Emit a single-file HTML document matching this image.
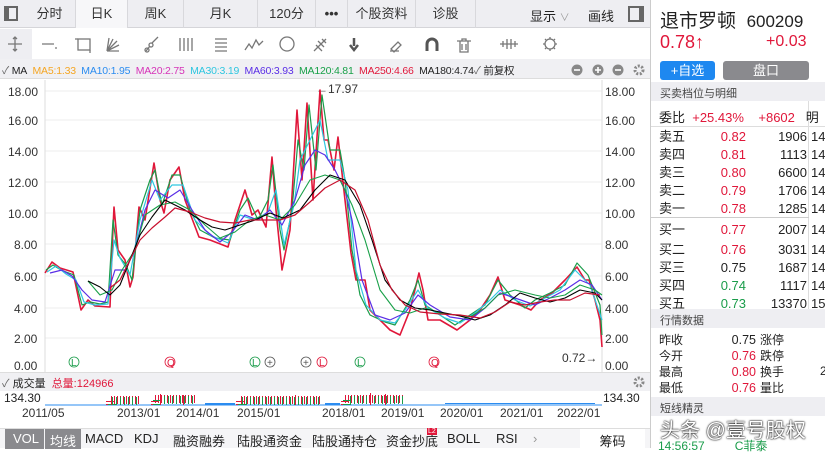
<!DOCTYPE html>
<html><head><meta charset="utf-8"><style>
*{margin:0;padding:0;box-sizing:border-box}
body{width:825px;height:448px;overflow:hidden;background:#fff;font-family:"Liberation Sans","Noto Sans CJK SC",sans-serif;position:relative;color:#222}
.a{position:absolute;white-space:nowrap}
.tab{position:absolute;top:0;height:28px;line-height:28px;font-size:13px;text-align:center;color:#333;border-right:1px solid #d8d8dc}
.r{color:#e0173a}.g{color:#1a9c4a}
</style></head><body>
<div class="a" style="left:0;top:0;width:650px;height:28px;background:#eeeef2;border-bottom:1px solid #d5d5d9"></div>
<div class="a" style="left:4px;top:6px;width:14px;height:15px;border:2px solid #666;border-left-width:5px"></div>
<div class="tab" style="left:24px;width:52px">分时</div>
<div class="tab" style="left:76px;width:52px;background:#f7f7f9">日K</div>
<div class="tab" style="left:128px;width:56px">周K</div>
<div class="tab" style="left:184px;width:74px">月K</div>
<div class="tab" style="left:258px;width:58px">120分</div>
<div class="tab" style="left:316px;width:32px;font-weight:bold">•••</div>
<div class="tab" style="left:348px;width:68px">个股资料</div>
<div class="tab" style="left:416px;width:60px">诊股</div>
<div class="a" style="left:530px;top:6px;font-size:13px">显示 <span style="color:#999;font-size:10px">∨</span></div>
<div class="a" style="left:588px;top:6px;font-size:13px">画线</div>
<div class="a" style="left:628px;top:6px;width:16px;height:16px;border:2px solid #666;border-right-width:5px"></div>
<div class="a" style="left:0;top:29px;width:650px;height:30px;background:#fff"></div>
<div class="a" style="left:0;top:29px;width:32px;height:30px;background:#eeeef2"></div>
<svg class="a" style="left:0;top:29px" width="650" height="30" stroke="#777" fill="none" stroke-width="1.3">
<path d="M15 8v14M8 15h14M13 10l2-2 2 2M13 20l2 2 2-2"/>
<path d="M42 15h12M55 19l2 0"/>
<rect x="78" y="10" width="12" height="11"/><path d="M75 10h3M90 21v3"/>
<path d="M107 22l10-10M107 22l12-6M107 22h12M107 22l6-12M107 22l2-13"/>
<path d="M146 22l4-5M152 14l6-6"/><circle cx="151" cy="16" r="2"/><circle cx="147" cy="21" r="2"/>
<path d="M180 9v13M184 9v13M188 9v13M192 9v13"/>
<path d="M215 10h12M215 14h12M215 18h12M215 22h12"/>
<path d="M245 21l4-6 3 4 4-8 3 5 4-4"/>
<circle cx="287" cy="15" r="7"/>
<path d="M314 22l12-12M318 12l6 6M316 16l6 6M322 10l4 4"/>
<path d="M354 9v8M350 16l4 5 4-5" stroke-width="2.5" stroke="#555"/>
<path d="M390 22h9M391 20l7-7 3 3-7 7z"/>
<path d="M427 22v-7a5 5 0 0 1 10 0v7" stroke-width="3" stroke="#555"/>
<path d="M457 12h14M460 12v11h8V12M462 15v6M466 15v6M462 12v-2h4v2"/>
<path d="M500 15h18M503 12v6M507 10v10M511 10v10M515 12v6"/>
<circle cx="550" cy="15" r="5"/><path d="M550 8v2M550 20v2M543 15h2M555 15h2M545 10l1 1M554 19l1 1M555 10l-1 1M545 20l1-1"/>
</svg>
<div class="a" style="left:0;top:59px;width:650px;height:20px;background:#f0f0f3;border-bottom:1px solid #ddd"></div>
<div class="a" style="left:2px;top:63px;font-size:10.5px;letter-spacing:-0.2px"><span style="color:#666">✓</span> MA&nbsp; <span style="color:#f5a623">MA5:1.33</span>&nbsp; <span style="color:#2b8cf0">MA10:1.95</span>&nbsp; <span style="color:#d633b8">MA20:2.75</span>&nbsp; <span style="color:#2ec6e0">MA30:3.19</span>&nbsp; <span style="color:#5a2ee6">MA60:3.93</span>&nbsp; <span style="color:#18a048">MA120:4.81</span>&nbsp; <span style="color:#e0173a">MA250:4.66</span>&nbsp; <span>MA180:4.74</span><span style="color:#666">✓</span> 前复权</div>
<svg class="a" style="left:568px;top:62px" width="80" height="16"><circle cx="9" cy="8" r="5.5" fill="#888"/><path d="M6 8h6" stroke="#fff" stroke-width="1.6"/><circle cx="30" cy="8" r="5.5" fill="#888"/><path d="M27 8h6M30 5v6" stroke="#fff" stroke-width="1.6"/><circle cx="50" cy="8" r="5.5" fill="#888"/><path d="M47 8h6" stroke="#fff" stroke-width="1.6"/><circle cx="71" cy="8" r="4" fill="none" stroke="#888" stroke-width="3" stroke-dasharray="2 1.5"/></svg>
<svg class="a" style="left:0;top:80px" width="650" height="292" font-size="12" font-family="Liberation Sans">
<g stroke="#eee"><path d="M45 11h557M45 40h557M45 71h557M45 102h557M45 133h557M45 164h557M45 196h557M45 228h557M45 258h557"/></g>
<path d="M45 0v292M602 0v292" stroke="#ddd"/>
<g fill="#333"><text x="8" y="16">18.00</text><text x="8" y="45">16.00</text><text x="8" y="76">14.00</text><text x="8" y="107">12.00</text><text x="8" y="138">10.00</text><text x="14" y="169">8.00</text><text x="14" y="201">6.00</text><text x="14" y="233">4.00</text><text x="14" y="263">2.00</text><text x="14" y="290">0.00</text>
<text x="605" y="16">18.00</text><text x="605" y="45">16.00</text><text x="605" y="76">14.00</text><text x="605" y="107">12.00</text><text x="605" y="138">10.00</text><text x="605" y="169">8.00</text><text x="605" y="201">6.00</text><text x="605" y="233">4.00</text><text x="605" y="263">2.00</text><text x="605" y="290">0.00</text>
<text x="316" y="13">←17.97</text><text x="562" y="282">0.72→</text></g>
<g fill="none" stroke-width="1.6" stroke-linejoin="round">
<polyline stroke="#e0173a" points="45,193 52,182 60,188 73,192 81,230 88,220 95,226 110,227 112,170 114,127 118,170 125,180 130,207 133,197 139,127 145,140 154,83 160,120 164,133 170,100 179,87 185,120 199,157 210,160 228,167 235,140 245,110 252,135 258,130 266,147 270,100 272,77 276,130 282,190 290,150 297,30 302,100 307,23 313,120 320,10 324,60 328,60 334,90 338,57 345,120 351,173 356,200 365,200 370,230 380,240 390,250 400,255 410,230 419,193 423,210 428,240 440,240 457,250 470,240 480,230 490,215 498,197 505,220 520,225 531,230 540,220 552,213 565,200 577,187 585,200 589,200 595,220 600,240 602,267"/>
<polyline stroke="#1a9c4a" stroke-width="1.2" points="46,190 53,185 61,190 74,195 82,225 90,222 100,224 108,222 113,140 118,175 126,185 132,200 140,130 150,100 155,90 162,125 172,95 180,95 190,130 200,150 215,158 230,160 240,130 248,118 258,140 268,120 273,85 280,150 284,170 292,130 298,60 304,90 309,25 316,90 322,15 330,70 340,70 345,100 352,170 360,215 370,235 385,242 395,245 410,220 418,200 425,225 440,235 455,245 470,235 485,225 498,200 510,215 525,228 535,220 550,213 565,205 577,183 588,195 600,225 602,255"/>
<polyline stroke="#2ec6e0" stroke-width="1.2" points="47,192 56,186 66,194 76,200 84,222 95,225 108,224 114,160 120,178 130,195 140,140 152,100 160,120 172,105 183,105 195,140 210,155 228,163 240,135 255,140 268,132 276,110 284,165 294,125 300,80 310,60 320,40 328,80 340,80 348,110 356,190 366,225 380,240 395,243 405,230 418,210 428,228 445,238 460,243 475,233 490,220 500,210 515,220 530,226 545,218 560,210 575,190 590,205 602,240"/>
<polyline stroke="#5a2ee6" stroke-width="1.2" points="50,193 62,190 72,196 82,210 92,220 105,222 115,190 125,190 135,170 145,130 155,110 168,118 180,110 192,130 205,150 220,162 232,152 245,135 258,140 270,130 282,145 295,120 305,85 315,70 325,75 335,90 345,110 352,140 362,200 375,235 390,240 405,233 418,215 430,225 450,237 470,240 485,228 500,213 515,218 535,225 550,218 565,210 580,200 592,205 602,220"/>
<polyline stroke="#18a048" stroke-width="1.1" points="88,201 100,215 112,210 122,190 135,170 145,135 160,125 175,122 190,130 205,145 220,158 235,152 250,140 265,135 280,140 295,125 310,100 325,95 340,100 352,125 365,160 380,210 395,230 410,233 425,228 440,233 455,235 470,237 485,228 498,215 515,210 535,215 550,218 565,215 580,205 595,210 602,215"/>
<polyline stroke="#000" stroke-width="1.1" points="88,201 100,207 110,215 120,205 130,180 140,155 152,137 165,120 175,125 185,130 200,140 212,147 225,150 240,145 255,140 270,133 283,138 300,130 315,110 330,95 345,100 360,125 372,160 385,200 400,220 415,228 430,230 445,233 460,236 475,240 490,235 505,225 520,213 535,218 550,222 565,218 580,210 595,213 602,220"/>
<polyline stroke="#c8102e" stroke-width="1.2" points="110,208 120,200 130,180 140,160 152,148 165,137 175,128 190,132 205,138 220,142 235,143 250,140 265,140 280,140 295,135 310,122 325,108 340,100 355,110 368,140 380,185 392,210 405,225 420,232 440,234 460,235 480,238 495,232 510,222 525,225 540,222 555,220 570,220 585,213 600,215"/>
</g>
<g font-size="10" fill="none" stroke-width="0.8">
<circle cx="74" cy="282" r="5" stroke="#1a9c4a"/><text x="71" y="286" fill="#1a9c4a" stroke="none">L</text>
<circle cx="170" cy="282" r="5" stroke="#e0173a"/><text x="167" y="286" fill="#e0173a" stroke="none">Q</text>
<circle cx="255" cy="282" r="5" stroke="#1a9c4a"/><text x="252" y="286" fill="#1a9c4a" stroke="none">L</text>
<circle cx="270" cy="282" r="5" stroke="#555"/><text x="267" y="286" fill="#555" stroke="none">+</text>
<circle cx="306" cy="282" r="5" stroke="#555"/><text x="303" y="286" fill="#555" stroke="none">+</text>
<circle cx="322" cy="282" r="5" stroke="#e0173a"/><text x="319" y="286" fill="#e0173a" stroke="none">L</text>
<circle cx="360" cy="282" r="5" stroke="#1a9c4a"/><text x="357" y="286" fill="#1a9c4a" stroke="none">L</text>
<circle cx="434" cy="282" r="5" stroke="#e0173a"/><text x="431" y="286" fill="#e0173a" stroke="none">Q</text>
</g>
</svg>
<div class="a" style="left:0;top:372px;width:650px;height:19px;background:#f0f0f3;border-top:1px solid #ddd"></div>
<div class="a" style="left:2px;top:375px;font-size:11px"><span style="color:#666">✓</span> 成交量&nbsp; <span class="r">总量:124966</span></div>
<svg class="a" style="left:632px;top:375px" width="14" height="14"><circle cx="7" cy="7" r="4" fill="none" stroke="#888" stroke-width="3" stroke-dasharray="2 1.5"/></svg>
<div class="a" style="left:4px;top:391px;font-size:12px">134.30</div>
<div class="a" style="left:603px;top:391px;font-size:12px">134.30</div>
<svg class="a" style="left:45px;top:392px" width="557" height="14"><path d="M0 13h557" stroke="#2b8cf0"/>
<g stroke-width="8" fill="none">
<path d="M65 13v-5h30M110 13v-6h40M195 13v-5h80M300 13v-6h60" stroke="#e0173a" stroke-dasharray="1 2"/>
<path d="M67 13v-4h28M112 13v-5h38M197 13v-4h78M302 13v-5h58" stroke="#1a9c4a" stroke-dasharray="1 3"/>
</g>
<g fill="#e0173a"><rect x="66" y="4" width="1" height="9"/><rect x="115" y="2" width="1" height="11"/><rect x="138" y="3" width="1" height="10"/><rect x="250" y="3" width="1" height="10"/><rect x="325" y="1" width="1" height="12"/><rect x="340" y="2" width="1" height="11"/></g>
<g fill="#2b8cf0"><rect x="160" y="11" width="30" height="2"/><rect x="280" y="11" width="15" height="2"/><rect x="400" y="11" width="150" height="1"/></g></svg>
<div class="a" style="left:0;top:406px;width:650px;font-size:12px;color:#333">
<span class="a" style="left:22px">2011/05</span><span class="a" style="left:117px">2013/01</span><span class="a" style="left:176px">2014/01</span><span class="a" style="left:237px">2015/01</span><span class="a" style="left:322px">2018/01</span><span class="a" style="left:381px">2019/01</span><span class="a" style="left:440px">2020/01</span><span class="a" style="left:500px">2021/01</span><span class="a" style="left:557px">2022/01</span></div>
<div class="a" style="left:0;top:428px;width:650px;height:20px;background:#f5f5f7;border-top:1px solid #ddd;font-size:13px">
<span class="a" style="left:5px;top:0;width:39px;height:20px;background:#8a8a8e;color:#fff;padding:2px 0 0 8px">VOL</span>
<span class="a" style="left:45px;top:0;width:36px;height:20px;background:#8a8a8e;color:#fff;padding:2px 0 0 5px">均线</span>
<span class="a" style="left:85px;top:2px">MACD</span><span class="a" style="left:134px;top:2px">KDJ</span><span class="a" style="left:173px;top:2px">融资融券</span><span class="a" style="left:237px;top:2px">陆股通资金</span><span class="a" style="left:312px;top:2px">陆股通持仓</span><span class="a" style="left:386px;top:2px">资金抄底</span><span class="a" style="left:427px;top:-1px;background:#e0173a;color:#fff;font-size:7px;padding:0 1px">L2</span><span class="a" style="left:447px;top:2px">BOLL</span><span class="a" style="left:496px;top:2px">RSI</span><span class="a" style="left:533px;top:2px;color:#999">›</span>
<span class="a" style="left:580px;top:0;width:65px;height:20px;background:#fff;text-align:center;padding-top:2px">筹码</span></div>
<div class="a" style="left:650px;top:0;width:1px;height:448px;background:#ccc"></div>
<div class="a" style="left:660px;top:6px;font-size:19px">退市罗顿&nbsp; <span style="font-size:17px">600209</span></div>
<div class="a r" style="left:660px;top:32px;font-size:18px">0.78↑</div>
<div class="a r" style="left:766px;top:33px;font-size:16px">+0.03</div>
<div class="a" style="left:660px;top:61px;width:55px;height:19px;background:#1e88f0;border-radius:3px;color:#fff;font-size:13px;text-align:center;line-height:19px">+自选</div>
<div class="a" style="left:723px;top:61px;width:86px;height:19px;background:#8a8a8e;border-radius:3px;color:#fff;font-size:13px;text-align:center;line-height:19px">盘口</div>
<div class="a" style="left:651px;top:82px;width:174px;height:19px;background:#eeeef2;font-size:11px;padding:3px 0 0 9px;color:#444">买卖档位与明细</div>
<div class="a" style="left:651px;top:101px;width:174px;height:26px;border-bottom:1px solid #ddd"></div>
<div class="a" style="left:808px;top:101px;width:1px;height:208px;background:#ddd"></div>
<div class="a" style="left:659px;top:107px;font-size:13px">委比 <span class="r">&nbsp;+25.43%&nbsp;&nbsp;&nbsp;&nbsp;+8602</span>&nbsp;&nbsp; 明</div>
<div class="a" style="left:651px;top:217px;width:158px;height:1px;background:#ccc"></div>
<div class="a" style="left:659px;top:128px;font-size:13px;line-height:18px">卖五<br>卖四<br>卖三<br>卖二<br>卖一<br><span style="line-height:23px">买一</span><br>买二<br>买三<br>买四<br>买五</div>
<div class="a" style="left:700px;top:128px;width:46px;text-align:right;font-size:13px;line-height:18px"><span class="r">0.82<br>0.81<br>0.80<br>0.79<br>0.78<br><span style="line-height:23px">0.77</span><br>0.76</span><br>0.75<br><span class="g">0.74<br>0.73</span></div>
<div class="a" style="left:750px;top:128px;width:57px;text-align:right;font-size:13px;line-height:18px">1906<br>1113<br>6600<br>1706<br>1285<br><span style="line-height:23px">2007</span><br>3031<br>1687<br>1117<br>13370</div>
<div class="a" style="left:811px;top:128px;font-size:13px;line-height:18px">14<br>14<br>14<br>14<br>14<br><span style="line-height:23px">14</span><br>14<br>14<br>14<br>15</div>
<div class="a" style="left:651px;top:309px;width:174px;height:19px;background:#eeeef2;font-size:11px;padding:3px 0 0 9px;color:#444">行情数据</div>
<div class="a" style="left:659px;top:332px;font-size:12px;line-height:16px">昨收<br>今开<br>最高<br>最低</div>
<div class="a" style="left:720px;top:332px;width:36px;text-align:right;font-size:12.5px;line-height:16px">0.75<br><span class="r">0.76<br>0.80<br>0.76</span></div>
<div class="a" style="left:760px;top:332px;font-size:12px;line-height:16px">涨停<br>跌停<br>换手<br>量比</div>
<div class="a" style="left:820px;top:364px;font-size:12px">2</div>
<div class="a" style="left:651px;top:397px;width:174px;height:19px;background:#eeeef2;font-size:11px;padding:3px 0 0 9px;color:#444">短线精灵</div>
<div class="a" style="left:660px;top:414px;font-size:20px;color:#fff;text-shadow:0 0 2px #000,0 0 1px #000">头条 @壹号股权</div>
<div class="a g" style="left:658px;top:437px;font-size:12px">14:56:57&nbsp;&nbsp;&nbsp;&nbsp;&nbsp;&nbsp;&nbsp;&nbsp;&nbsp;C菲泰</div>
</body></html>
